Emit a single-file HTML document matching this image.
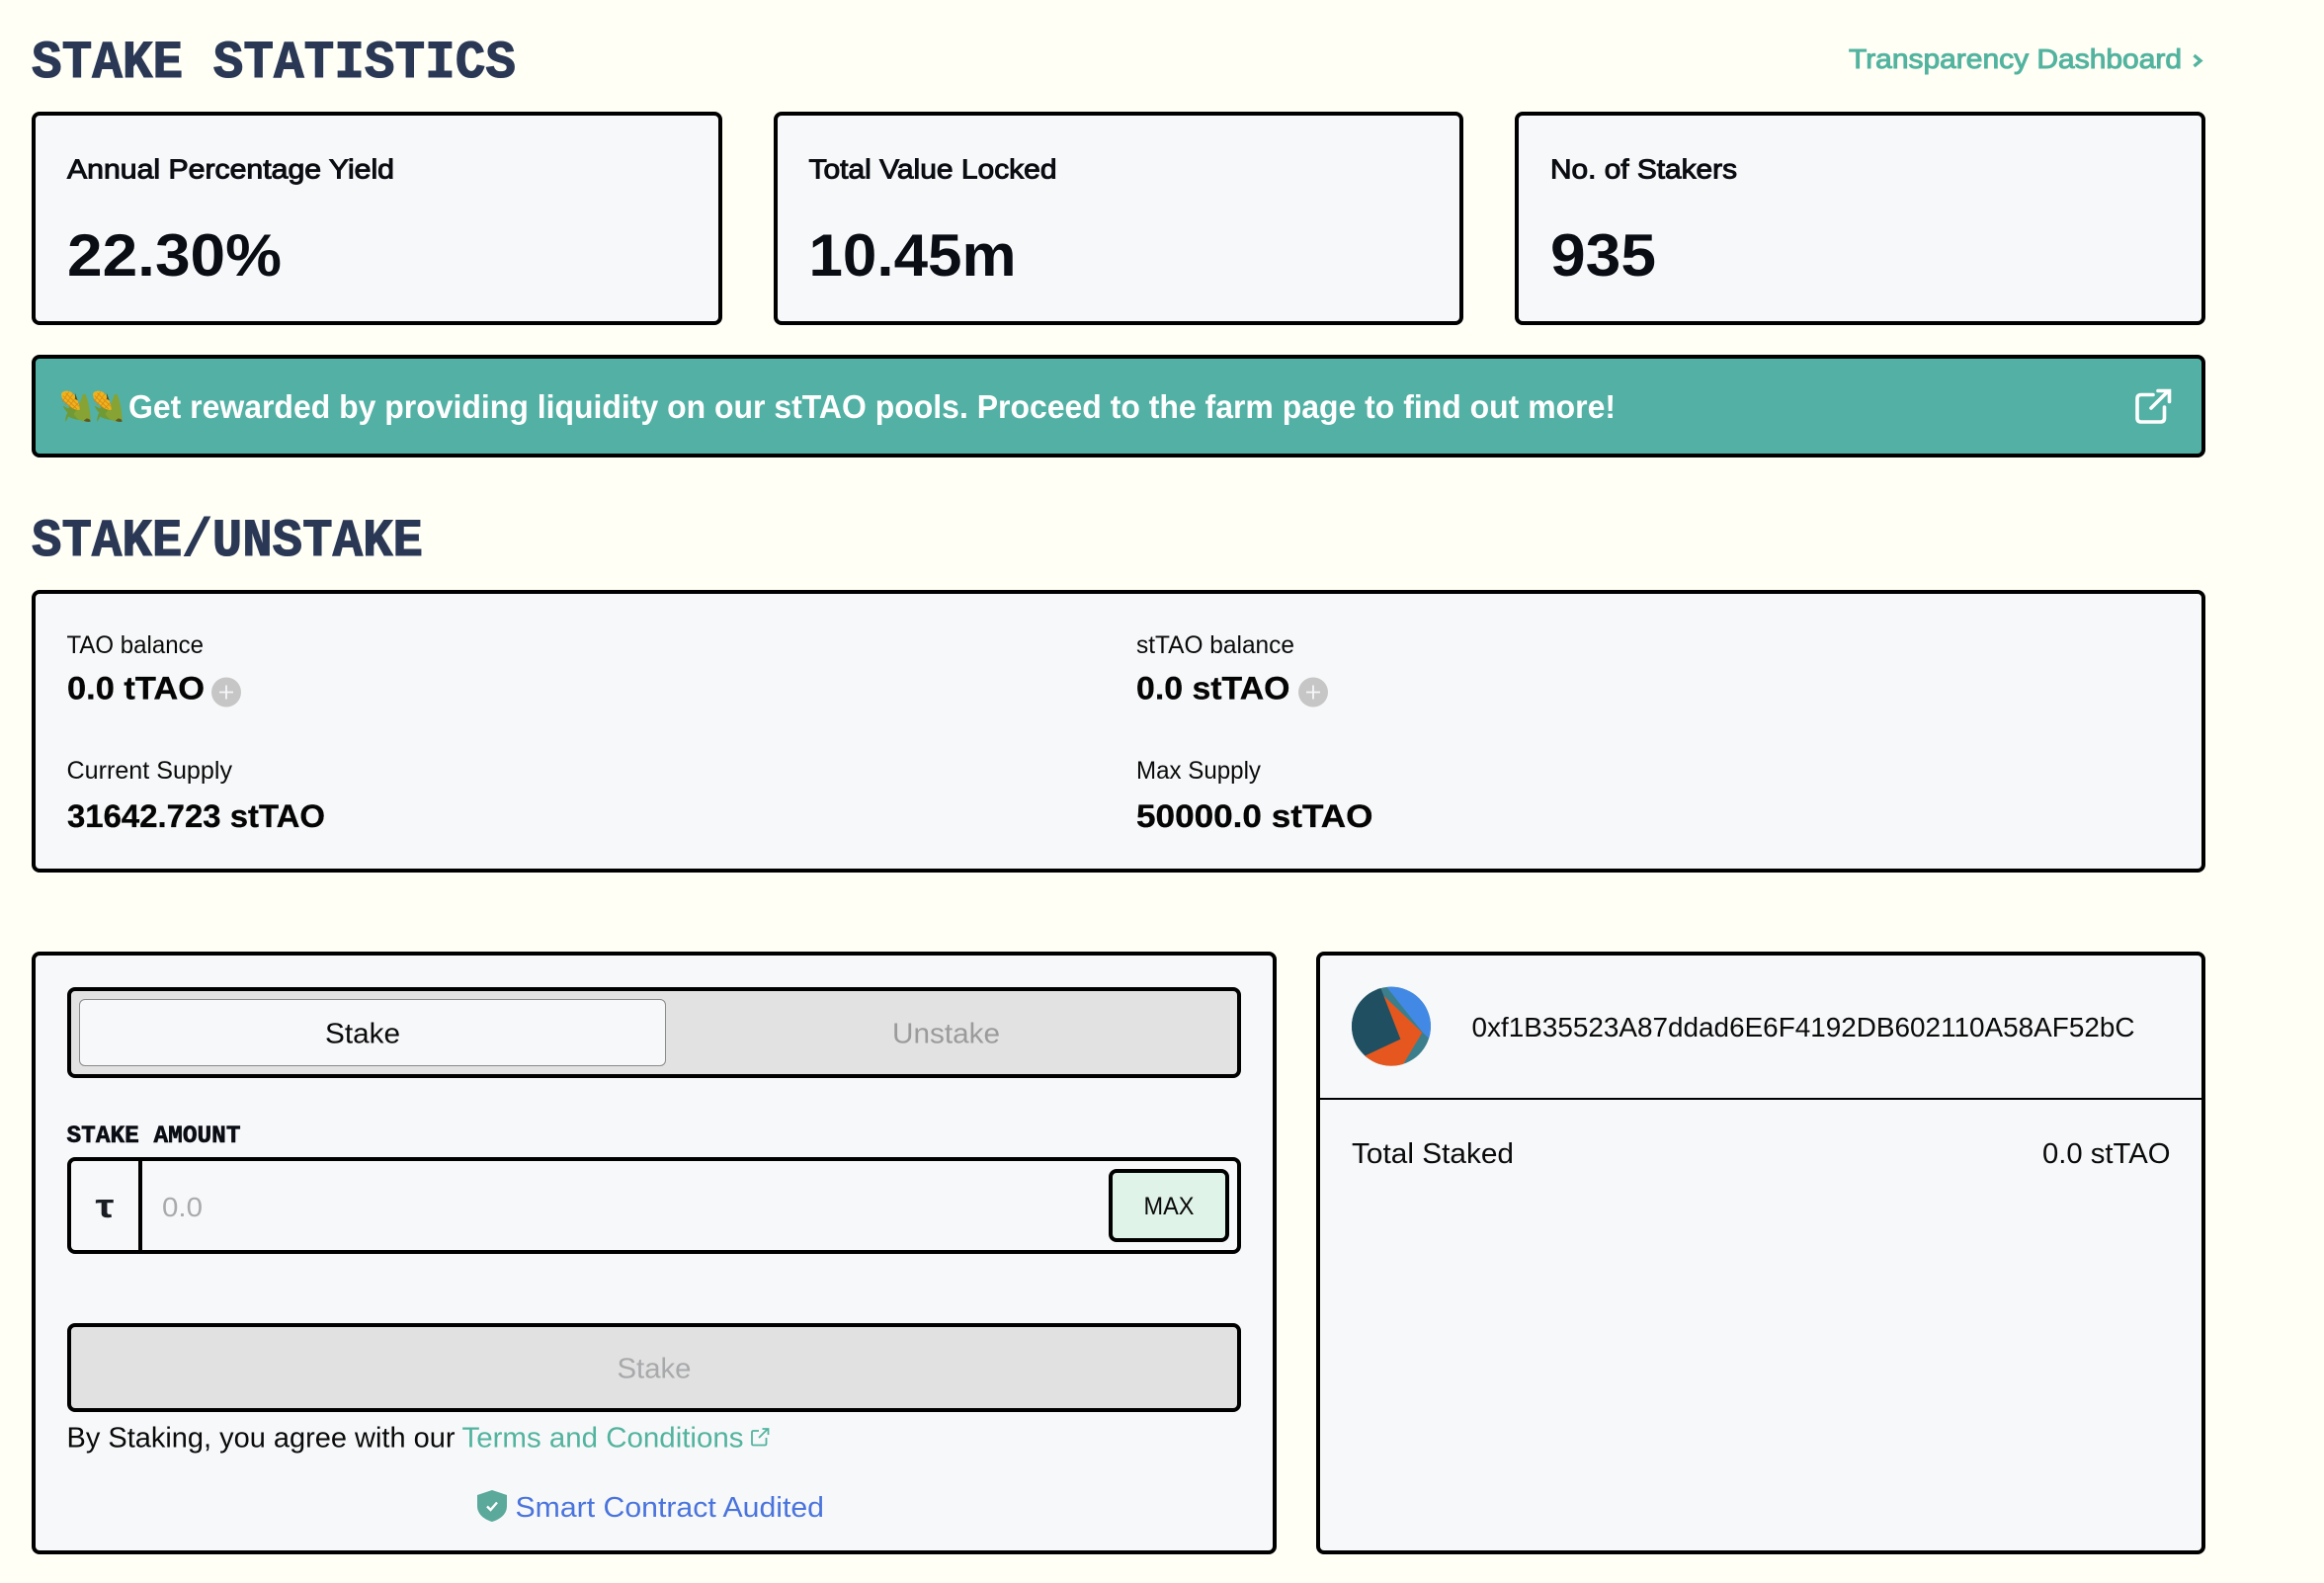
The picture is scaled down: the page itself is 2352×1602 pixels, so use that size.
<!DOCTYPE html>
<html lang="en">
<head>
<meta charset="utf-8">
<title>Stake Statistics</title>
<style>
html,body{margin:0;padding:0;background:#fffff6;}
body{position:relative;width:2352px;height:1602px;overflow:hidden;font-family:"Liberation Sans",sans-serif;}
.b{position:absolute;box-sizing:border-box;border:4px solid #000;border-radius:8px;background:#f7f8f9;}
svg.o{position:absolute;left:0;top:0;}
text{font-family:"Liberation Sans",sans-serif;fill:#000;}
.m{font-family:"Liberation Mono",monospace;font-weight:700;}
.h{font-size:54px;fill:#2a3855;stroke:#2a3855;stroke-width:1.1px;}
.lab{font-size:28px;font-weight:400;fill:#0a0d12;stroke:#0a0d12;stroke-width:1px;}
.big{font-size:60px;font-weight:700;fill:#0a0d14;}
.sm{font-size:25px;fill:#0a0a0a;}
.val{font-size:32px;font-weight:700;fill:#050505;}
.t{font-size:29px;fill:#0a0a0a;}
</style>
</head>
<body>
<div class="b" style="left:32px;top:113px;width:699px;height:216px"></div>
<div class="b" style="left:783px;top:113px;width:698px;height:216px"></div>
<div class="b" style="left:1533px;top:113px;width:699px;height:216px"></div>
<div class="b" style="left:32px;top:359px;width:2200px;height:104px;background:#52b1a4"></div>
<div class="b" style="left:32px;top:597px;width:2200px;height:286px"></div>
<div class="b" style="left:32px;top:963px;width:1260px;height:610px"></div>
<div class="b" style="left:1332px;top:963px;width:900px;height:610px"></div>
<div class="b" style="left:68px;top:999px;width:1188px;height:92px;background:#e2e2e3"></div>
<div style="position:absolute;box-sizing:border-box;left:80px;top:1011px;width:594px;height:68px;border:1px solid #8a8a8a;border-radius:6px;background:#f7f8f9"></div>
<div class="b" style="left:68px;top:1171px;width:1188px;height:98px;background:#f7f8f9"></div>
<div style="position:absolute;left:140px;top:1171px;width:4px;height:98px;background:#000"></div>
<div class="b" style="left:1122px;top:1183px;width:122px;height:74px;background:#dff3e8"></div>
<div class="b" style="left:68px;top:1339px;width:1188px;height:90px;background:#e1e1e2"></div>
<div style="position:absolute;left:1336px;top:1111px;width:896px;height:2px;background:#000"></div>

<svg class="o" width="2352" height="1602" viewBox="0 0 2352 1602" xmlns="http://www.w3.org/2000/svg">
<defs>
<clipPath id="cb"><circle cx="264" cy="266" r="120"/></clipPath>
<g id="corn2">
  <path d="M44 32 C52 58 70 82 82 90 C68 90 40 88 24 78 C22 84 18 90 16 94 C14 84 18 72 22 66 C14 60 10 52 8 46 L24 54 Z" fill="#6f9a35"/>
  <path d="M74 10 C84 30 88 58 90 82 C92 90 86 95 76 93 C60 92 46 84 40 70 C50 60 60 36 66 14 Z" fill="#86a334"/>
  <path d="M78 84 C86 84 90 88 90 93 C84 95 76 94 70 90 Z" fill="#5c5a22"/>
  <path d="M4 8 C12 0 26 0 36 8 C48 18 58 40 58 58 C50 60 38 56 26 46 C12 36 0 20 4 8 Z" fill="#f0b31e"/>
  <path d="M8 16 L50 56 M16 8 L56 48 M4 26 L36 54 M6 34 L26 4 M14 44 L40 8 M24 50 L48 20 M36 56 L56 36" stroke="#cf7f12" stroke-width="2.4" fill="none" opacity=".75"/>
  <path d="M44 8 L52 30 L44 26 Z" fill="#55501d"/>
</g>
</defs>

<text class="m h" x="32" y="78" textLength="490" lengthAdjust="spacingAndGlyphs">STAKE STATISTICS</text>
<text x="1871" y="69" font-size="28" style="fill:#52b39f;stroke:#52b39f;stroke-width:1px" textLength="337" lengthAdjust="spacingAndGlyphs">Transparency Dashboard</text>
<path d="M2220.5 56 L2227 61.5 L2220.5 67" fill="none" stroke="#52b39f" stroke-width="3.4"/>

<text class="lab" x="68" y="180.500" textLength="331" lengthAdjust="spacingAndGlyphs">Annual Percentage Yield</text>
<text class="big" x="68" y="279" textLength="217" lengthAdjust="spacingAndGlyphs">22.30%</text>
<text class="lab" x="818.500" y="180.500" textLength="251" lengthAdjust="spacingAndGlyphs">Total Value Locked</text>
<text class="big" x="818.500" y="279" textLength="210" lengthAdjust="spacingAndGlyphs">10.45m</text>
<text class="lab" x="1569" y="180.500" textLength="189" lengthAdjust="spacingAndGlyphs">No. of Stakers</text>
<text class="big" x="1569" y="279" textLength="107" lengthAdjust="spacingAndGlyphs">935</text>

<use href="#corn2" transform="translate(61 395) scale(.34)"/>
<use href="#corn2" transform="translate(93 395) scale(.34)"/>
<text x="130" y="423" font-size="33" font-weight="700" style="fill:#fff" textLength="1505" lengthAdjust="spacingAndGlyphs">Get rewarded by providing liquidity on our stTAO pools. Proceed to the farm page to find out more!</text>
<path d="M2180 399.5 H2168 Q2164 399.5 2164 403.5 V423 Q2164 427 2168 427 H2187.5 Q2191.5 427 2191.5 423 V412" transform="translate(-1 0)" fill="none" stroke="#fff" stroke-width="3.6" stroke-linecap="round"/>
<path d="M2178 413 L2195 396 M2185 395.5 H2196.5 V406.5" transform="translate(-1 0)" fill="none" stroke="#fff" stroke-width="3.6" stroke-linecap="round"/>

<text class="m h" x="32" y="562" textLength="396" lengthAdjust="spacingAndGlyphs">STAKE/UNSTAKE</text>

<text class="sm" x="67.500" y="661" textLength="138.500" lengthAdjust="spacingAndGlyphs">TAO balance</text>
<text class="val" x="68" y="707.500" textLength="139" lengthAdjust="spacingAndGlyphs" style="stroke:#050505;stroke-width:.3px">0.0 tTAO</text>
<circle cx="229" cy="700.500" r="15" fill="#c6c6c6"/>
<path d="M222 700.500 H236 M229 693.500 V707.500" stroke="#f6f7f9" stroke-width="1.8"/>
<text class="sm" x="67.500" y="788" textLength="167.500" lengthAdjust="spacingAndGlyphs">Current Supply</text>
<text class="val" x="68" y="837" textLength="261" lengthAdjust="spacingAndGlyphs" style="stroke:#050505;stroke-width:.3px">31642.723 stTAO</text>

<text class="sm" x="1150" y="661" textLength="160" lengthAdjust="spacingAndGlyphs">stTAO balance</text>
<text class="val" x="1150" y="707.500" textLength="155.500" lengthAdjust="spacingAndGlyphs" style="stroke:#050505;stroke-width:.3px">0.0 stTAO</text>
<circle cx="1329" cy="700.500" r="15" fill="#c6c6c6"/>
<path d="M1322 700.500 H1336 M1329 693.500 V707.500" stroke="#f6f7f9" stroke-width="1.8"/>
<text class="sm" x="1150" y="788" textLength="126" lengthAdjust="spacingAndGlyphs">Max Supply</text>
<text class="val" x="1150" y="837" textLength="239.500" lengthAdjust="spacingAndGlyphs" style="stroke:#050505;stroke-width:.3px">50000.0 stTAO</text>

<text class="t" x="329" y="1055.500" textLength="76" lengthAdjust="spacingAndGlyphs">Stake</text>
<text class="t" x="903" y="1055.500" textLength="109" lengthAdjust="spacingAndGlyphs" style="fill:#9b9b9b">Unstake</text>

<text class="m" x="67.500" y="1156" font-size="25" style="fill:#0a0d14;stroke:#0a0d14;stroke-width:.6px" textLength="176" lengthAdjust="spacingAndGlyphs">STAKE AMOUNT</text>
<text x="96.500" y="1232" font-size="34" font-weight="700" style="fill:#1a1d24" textLength="19" lengthAdjust="spacingAndGlyphs">τ</text>
<text x="164" y="1231" font-size="28" style="fill:#a9aaab" textLength="41" lengthAdjust="spacingAndGlyphs">0.0</text>
<text x="1157.500" y="1229" font-size="25" style="fill:#0a0a0a" textLength="51" lengthAdjust="spacingAndGlyphs">MAX</text>

<text class="t" x="624.500" y="1394.500" textLength="75" lengthAdjust="spacingAndGlyphs" style="fill:#a8a9aa">Stake</text>
<text class="t" x="67.500" y="1464.500" textLength="393" lengthAdjust="spacingAndGlyphs">By Staking, you agree with our</text>
<text class="t" x="467.500" y="1464.500" textLength="285" lengthAdjust="spacingAndGlyphs" style="fill:#52b39f">Terms and Conditions</text>
<path d="M768 1448 H762.5 Q761 1448 761 1449.5 V1461 Q761 1462.5 762.5 1462.5 H774 Q775.500 1462.500 775.500 1461 V1455" fill="none" stroke="#52b39f" stroke-width="1.8"/>
<path d="M768 1455 L777 1446 M771.500 1446 H777.500 V1452" fill="none" stroke="#52b39f" stroke-width="1.8"/>

<path d="M498 1508 L513 1513 V1524 C513 1533 505 1538 498 1540 C491 1538 483 1533 483 1524 V1513 Z" fill="#5aa99b"/>
<path d="M493 1524.500 L496.500 1528 L503 1520.500" fill="none" stroke="#fff" stroke-width="2.400"/>
<text class="t" x="521.500" y="1535" textLength="312.500" lengthAdjust="spacingAndGlyphs" style="fill:#4a74dd">Smart Contract Audited</text>

<g transform="translate(1320 950) scale(.3333)">
  <g clip-path="url(#cb)">
    <rect x="140" y="140" width="250" height="250" fill="#3b7f8c"/>
    <polygon points="245,140 360,285 378,302 400,250 340,140" fill="#4289e5"/>
    <polygon points="240,172 358,285 295,390 180,390 183,355 292,305" fill="#e5571f"/>
    <polygon points="232,150 292,305 185,355 135,300 135,170" fill="#1f4f60"/>
  </g>
</g>
<text x="1489.500" y="1049" font-size="28" style="fill:#0a0a0a" textLength="671" lengthAdjust="spacingAndGlyphs">0xf1B35523A87ddad6E6F4192DB602110A58AF52bC</text>
<text class="t" x="1368" y="1177" textLength="164" lengthAdjust="spacingAndGlyphs">Total Staked</text>
<text class="t" x="2067" y="1177" textLength="129.500" lengthAdjust="spacingAndGlyphs">0.0 stTAO</text>
</svg>
</body>
</html>
